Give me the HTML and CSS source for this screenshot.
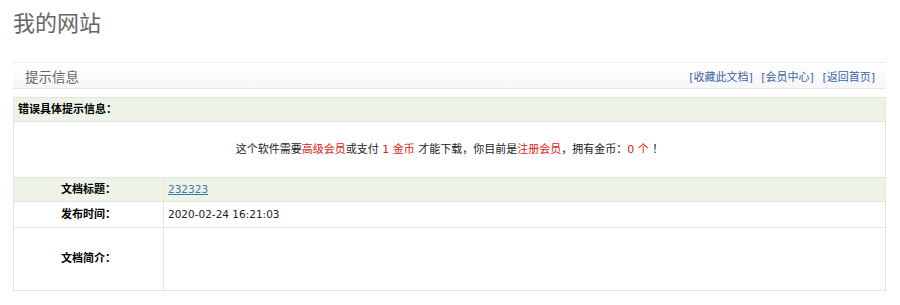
FILE: index.html
```html
<!DOCTYPE html>
<html lang="zh-CN">
<head>
    <meta charset="utf-8">
    <title>提示信息 - 我的网站</title>
    <link rel="stylesheet" href="styles.css">
</head>
<body>
    <div class="wrap">
        <div class="logo">我的网站</div>

        <!-- 标题栏 -->
        <div class="bar">
            <span class="bar-title">提示信息</span>
            <span class="bar-links">
                <a href="#">[收藏此文档]</a>
                <a href="#">[会员中心]</a>
                <a href="#">[返回首页]</a>
            </span>
        </div>

        <table class="info">
            <tr class="green">
                <th colspan="2" class="head">错误具体提示信息：</th>
            </tr>
            <tr>
                <td colspan="2" class="msg">
                    这个软件需要<span class="red">高级会员</span>或支付 <span class="red">1 金币</span> 才能下载，你目前是<span class="red">注册会员</span>，拥有金币：<span class="red">0 个</span> ！
                </td>
            </tr>
            <tr class="green row-title">
                <td class="label">文档标题：</td>
                <td><a href="#" class="doc-link num">232323</a></td>
            </tr>
            <tr class="row-time">
                <td class="label">发布时间：</td>
                <td><span class="num">2020-02-24 16:21:03</span></td>
            </tr>
            <tr class="row-intro">
                <td class="label">文档简介：</td>
                <td></td>
            </tr>
        </table>
    </div>
</body>
</html>
```

FILE: styles.css
```css
body {
    margin: 0;
    font-family: "DejaVu Sans", "Noto Sans CJK SC", sans-serif;
    font-size: 11px;
    color: #222;
    background: #fff;
}

.wrap {
    padding: 0 14px 0 13px;
}

.logo {
    height: 62px;
    padding-top: 5px;
    box-sizing: border-box;
    font-family: "Noto Sans CJK SC", serif;
    font-size: 22px;
    color: #666;
}

/* 标题栏 */
.bar {
    display: flex;
    justify-content: space-between;
    align-items: center;
    height: 25px;
    padding: 0 11px 0 12px;
    border-top: 1px solid #eee;
    border-bottom: 1px solid #e6e6e6;
    background: linear-gradient(#fff, #f6f6f6);
}

.bar-title {
    font-size: 13.5px;
    color: #666;
}

.bar-links a {
    margin-left: 5px;
    color: #3a65a8;
    text-decoration: none;
}

.info {
    width: 873px;
    margin-top: 8px;
    border-collapse: collapse;
    border: 1px solid #e2e7d8;
}

.info td,
.info th {
    border: 1px solid #e2e7d8;
    padding: 0 4px;
    line-height: 14px;
}

.green {
    background: #eef3e8;
}

.head {
    height: 23px;
    text-align: left;
    font-weight: bold;
    color: #000;
}

.msg {
    height: 55px;
    text-align: center;
    padding-top: 2px;
}

.red {
    color: #d21;
}

.label {
    width: 141px;
    text-align: center;
    font-weight: bold;
    color: #000;
}

.num {
    font-size: 10.5px;
}

.row-title td {
    height: 23px;
}

.row-time td {
    height: 25px;
}

.row-intro td {
    height: 62px;
}

.doc-link {
    color: #3a78b0;
}
```
